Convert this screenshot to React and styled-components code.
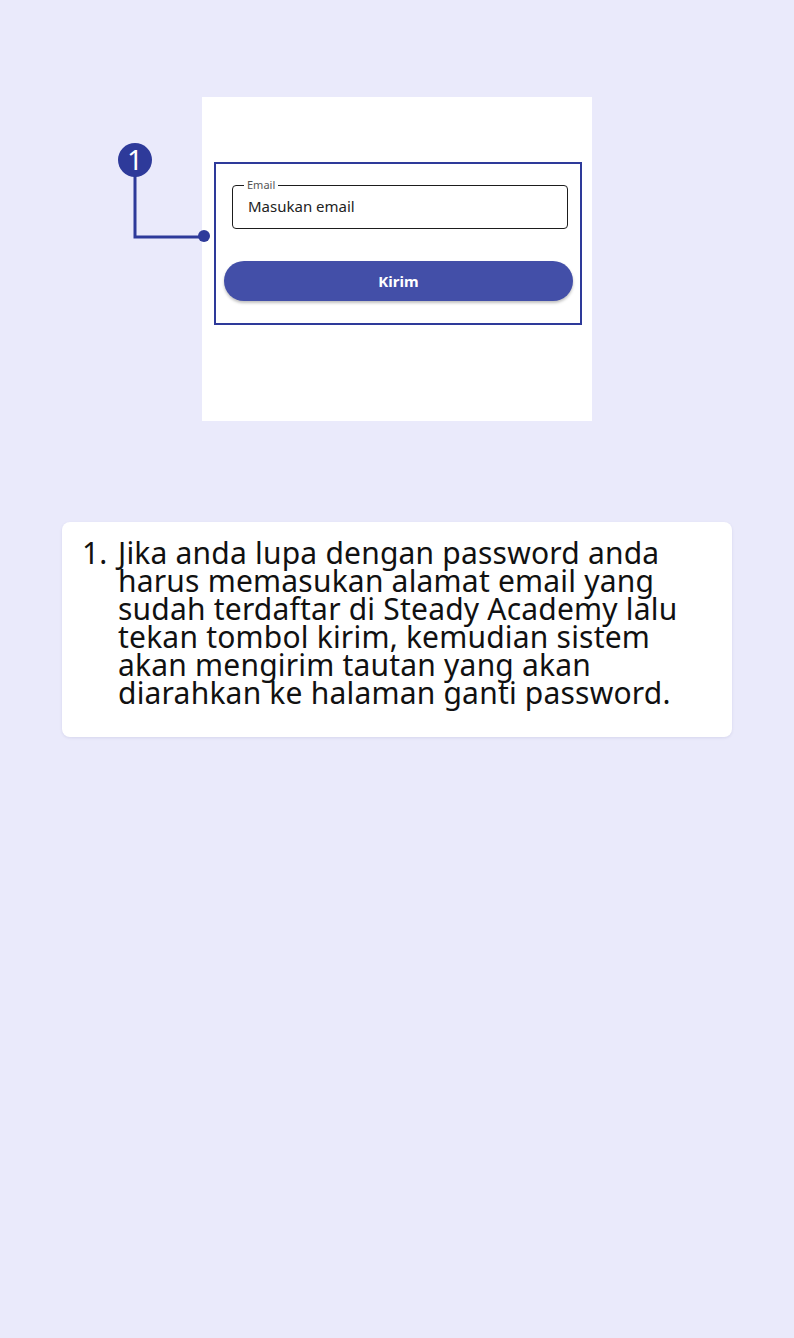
import React from "react";
import styled, { createGlobalStyle } from "styled-components";

const GlobalStyle = createGlobalStyle`
  body {
    margin: 0;
    background: #eaeafb;
    font-family: "Noto Sans", "Open Sans", sans-serif;
  }
`;

const Page = styled("div")`
  display: flex;
  flex-direction: column;
  min-height: 1338px;
  padding-top: 97px;
  box-sizing: border-box;
`;

const ShotArea = styled("div")`
  position: relative;
  margin-left: 202px;
  width: 390px;
  height: 324px;
  background: #ffffff;
  padding: 65px 0 0 12px;
  box-sizing: border-box;
`;

const Highlight = styled("div")`
  width: 368px;
  height: 163px;
  border: 2px solid #2e3a9a;
  box-sizing: border-box;
  padding: 21px 12px 0 8px;
  display: flex;
  flex-direction: column;
  align-items: flex-start;
`;

const Field = styled("fieldset")`
  margin: -5px 0 0 8px;
  width: 336px;
  height: 49px;
  border: 1px solid #1d1d1d;
  border-radius: 4px;
  padding: 0 15px;
  box-sizing: border-box;
  legend {
    font-size: 11px;
    color: #555555;
    padding: 0 3px;
    margin-left: -4px;
    line-height: 10px;
  }
`;

const Placeholder = styled("div")`
  font-size: 15px;
  color: #222222;
  line-height: 20px;
  margin-top: 6px;
`;

const Button = styled("div")`
  margin-top: 32px;
  width: 349px;
  height: 40px;
  border-radius: 20px;
  background: #434fa8;
  color: #ffffff;
  font-weight: 700;
  font-size: 15px;
  display: flex;
  align-items: center;
  justify-content: center;
  box-shadow: 0 2px 3px rgba(0, 0, 0, 0.25);
`;

const Callout = styled("svg")`
  position: absolute;
  left: -116px;
  top: 47px;
  overflow: visible;
`;

const Card = styled("div")`
  margin: 101px 0 0 62px;
  width: 670px;
  height: 215px;
  background: #ffffff;
  border-radius: 8px;
  box-sizing: border-box;
  padding: 17px 20px 0 20px;
  box-shadow: 0 1px 3px rgba(80, 80, 140, 0.12);
`;

const Step = styled("div")`
  display: flex;
  font-size: 30px;
  line-height: 28px;
  letter-spacing: 0.2px;
  color: #111111;
`;

const StepNum = styled("span")`
  width: 36px;
  flex-shrink: 0;
`;

const StepText = styled("span")`
  width: 572px;
`;

export default function App() {
  return (
    <>
      <GlobalStyle />
      <Page>
        <ShotArea>
          <Callout width="130" height="120">
            <polyline points="49,16 49,93 118,93" fill="none" stroke="#2e3a9a" strokeWidth="3" />
            <circle cx="49" cy="16" r="17" fill="#2e3a9a" />
            <circle cx="118" cy="92" r="6" fill="#2e3a9a" />
            <text x="49" y="26" fill="#ffffff" fontSize="28" textAnchor="middle" fontFamily="Noto Sans, sans-serif">1</text>
          </Callout>
          <Highlight>
            <Field>
              <legend>Email</legend>
              <Placeholder>Masukan email</Placeholder>
            </Field>
            <Button>Kirim</Button>
          </Highlight>
        </ShotArea>
        <Card>
          <Step>
            <StepNum>1.</StepNum>
            <StepText>
              Jika anda lupa dengan password anda harus memasukan alamat email yang sudah terdaftar di Steady Academy lalu tekan tombol kirim, kemudian sistem akan mengirim tautan yang akan diarahkan ke halaman ganti password.
            </StepText>
          </Step>
        </Card>
      </Page>
    </>
  );
}
